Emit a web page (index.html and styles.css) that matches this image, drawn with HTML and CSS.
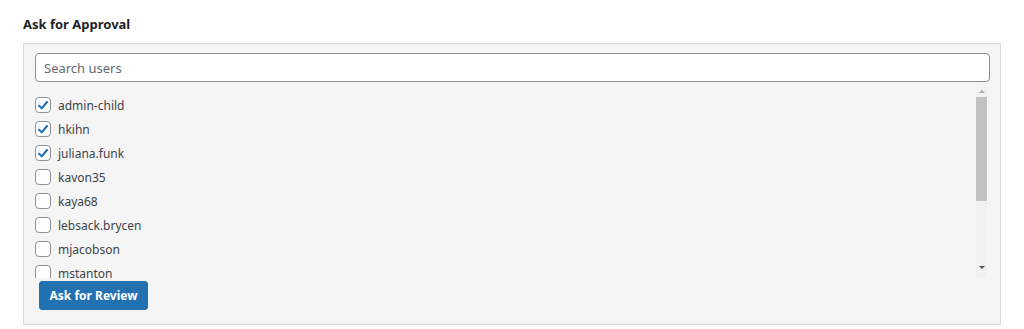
FILE: index.html
```html
<!DOCTYPE html>
<html lang="en">
<head>
    <meta charset="UTF-8">
    <title>Ask for Approval</title>
    <link rel="stylesheet" href="styles.css">
</head>
<body>
    <div class="approval">
        <h3 class="approval-title">Ask for Approval</h3>
        <div class="panel">
            <input type="text" class="search" placeholder="Search users">
            <div class="user-box">
                <div class="user-list">
                    <label class="user"><span class="box checked"><svg viewBox="0 0 16 16"><path d="M3.5 8.2 L6.6 11.2 L12.6 4" /></svg></span>admin-child</label>
                    <label class="user"><span class="box checked"><svg viewBox="0 0 16 16"><path d="M3.5 8.2 L6.6 11.2 L12.6 4" /></svg></span>hkihn</label>
                    <label class="user"><span class="box checked"><svg viewBox="0 0 16 16"><path d="M3.5 8.2 L6.6 11.2 L12.6 4" /></svg></span>juliana.funk</label>
                    <label class="user"><span class="box"></span>kavon35</label>
                    <label class="user"><span class="box"></span>kaya68</label>
                    <label class="user"><span class="box"></span>lebsack.brycen</label>
                    <label class="user"><span class="box"></span>mjacobson</label>
                    <label class="user"><span class="box"></span>mstanton</label>
                </div>
                <div class="scrollbar">
                    <span class="arrow up"></span>
                    <span class="thumb"></span>
                    <span class="track"></span>
                    <span class="arrow down"></span>
                </div>
            </div>
            <button class="review-btn">Ask for Review</button>
        </div>
    </div>
</body>
</html>
```

FILE: styles.css
```css
body {
    margin: 0;
    padding: 0 23px;
    background-color: #fff;
    font-family: "Noto Sans", "Open Sans", sans-serif;
    color: #1d2327;
}
.approval {
    width: 978px;
}
.approval-title {
    margin: 0;
    padding-top: 15px;
    height: 43px;
    box-sizing: border-box;
    font-size: 13px;
    font-weight: bold;
    line-height: 18px;
}
.panel {
    background-color: #f5f5f5;
    border: 1px solid #dcdcde;
    padding: 9px 10px 14px 11px;
}
.search {
    display: block;
    width: 100%;
    box-sizing: border-box;
    height: 29px;
    margin: 0;
    padding: 0 8px;
    border: 1px solid #8c8f94;
    border-radius: 4px;
    background: #fff;
    font-family: inherit;
    font-size: 13px;
    color: #2c3338;
}
.search::placeholder {
    color: #646970;
}
.user-box {
    display: flex;
    height: 191px;
    margin-top: 5px;
    overflow: hidden;
}
.user-list {
    flex: 1;
    padding-top: 6px;
    overflow: hidden;
}
.user {
    display: flex;
    align-items: center;
    height: 24px;
    font-size: 12px;
    color: #3c434a;
}
.box {
    width: 16px;
    height: 16px;
    box-sizing: border-box;
    border: 1px solid #8c8f94;
    border-radius: 4px;
    background: #fff;
    margin-right: 7px;
    display: flex;
    align-items: center;
    justify-content: center;
}
.box svg {
    width: 15px;
    height: 15px;
}
.box svg path {
    fill: none;
    stroke: #2271b1;
    stroke-width: 2.4;
    stroke-linecap: round;
    stroke-linejoin: round;
}
.scrollbar {
    width: 11px;
    margin-right: 3px;
    display: flex;
    flex-direction: column;
    align-items: center;
    background-color: #f1f1f1;
}
.arrow {
    width: 0;
    height: 0;
    border-left: 3px solid transparent;
    border-right: 3px solid transparent;
}
.arrow.up {
    border-bottom: 3px solid #a3a3a3;
    margin: 3px 0 4px;
}
.arrow.down {
    border-top: 3px solid #505050;
    margin: 0 0 9px;
}
.thumb {
    width: 100%;
    height: 104px;
    background-color: #c1c1c1;
}
.track {
    flex: 1;
}
.review-btn {
    display: block;
    margin: 3px 0 0 4px;
    height: 29px;
    width: 109px;
    padding: 0;
    border: 1px solid #2271b1;
    border-radius: 3px;
    background-color: #2271b1;
    color: #fff;
    font-family: inherit;
    font-size: 12px;
    font-weight: bold;
}
```
